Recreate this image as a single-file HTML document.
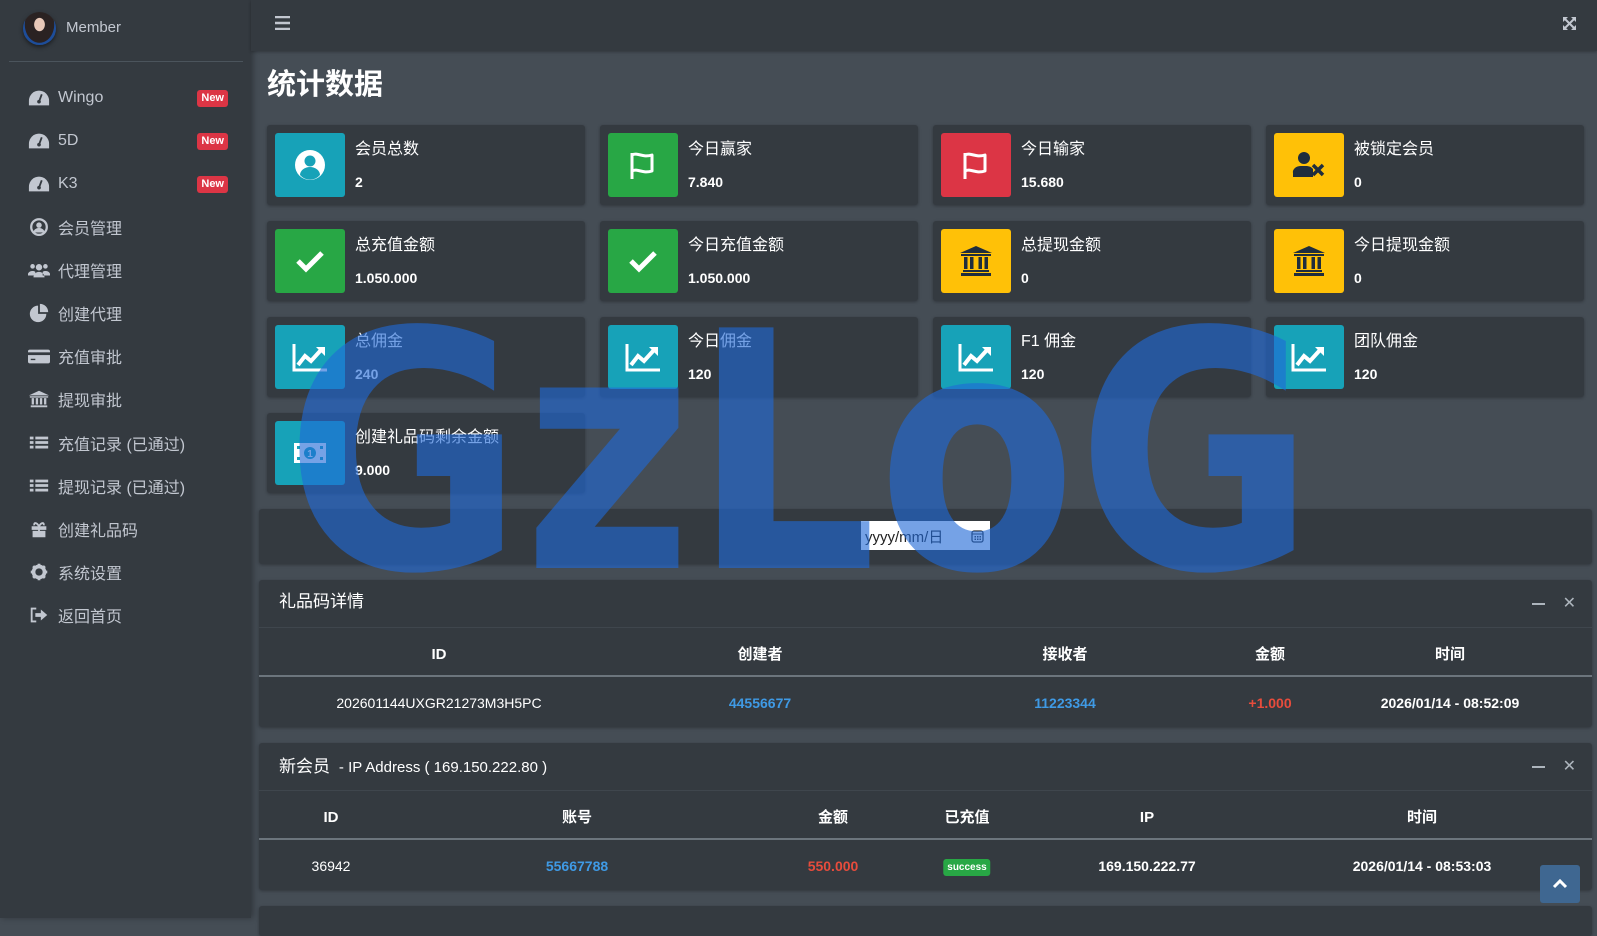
<!DOCTYPE html>
<html><head><meta charset="utf-8">
<style>
*{margin:0;padding:0;box-sizing:border-box}
body{width:1597px;height:918px;overflow:hidden;background:#454d55;font-family:"Liberation Sans","Noto Sans CJK SC",sans-serif;color:#fff;position:relative}
.a{position:absolute}
#side{left:0;top:0;width:251px;height:918px;background:#343a40;box-shadow:2px 0 6px rgba(0,0,0,.3)}
#nav{left:251px;top:0;width:1346px;height:51px;background:#343a40;box-shadow:0 1px 3px rgba(0,0,0,.3)}
.mi{position:absolute;left:28px;height:24px;display:flex;align-items:center;color:#c2c7d0;font-size:16px;width:200px}
.mi svg{width:22px;height:20px;margin-right:8px;flex:none}
.badge{position:absolute;right:0;top:4px;background:#dc3545;color:#fff;font-size:11px;font-weight:bold;padding:2px 4px;border-radius:3px;line-height:13px}
.card{position:absolute;width:318px;height:80px;background:#343a40;border-radius:3px;box-shadow:0 1px 3px rgba(0,0,0,.3)}
.ic{position:absolute;left:8px;top:8px;width:70px;height:64px;border-radius:3px;display:flex;align-items:center;justify-content:center}
.ct{position:absolute;left:88px;top:13px;font-size:16px;color:#fff;line-height:24px}
.cv{position:absolute;left:88px;top:47px;font-size:14px;font-weight:bold;line-height:20px}
.info{background:#17a2b8}.succ{background:#28a745}.dang{background:#dc3545}.warn{background:#ffc107}
.panel{position:absolute;left:259px;width:1333px;background:#343a40;border-radius:3px;box-shadow:0 1px 3px rgba(0,0,0,.3)}
.ph{height:48px;border-bottom:1px solid #3f464d;position:relative}
.ph .t{position:absolute;left:20px;top:10px;font-size:17px;line-height:24px}
.tools{position:absolute;right:16px;top:12px;color:#adb5bd;font-size:16px;line-height:24px}
.th{height:49px;border-bottom:2px solid #6c757d;position:relative}
.c{position:absolute;transform:translateX(-50%);white-space:nowrap;font-size:14px;line-height:20px}
.th .c{top:17px;font-weight:bold;font-size:15px}
.td .c{top:16px}
.blue{color:#3f9ae5;font-weight:bold}.red{color:#e74c3c;font-weight:bold}
</style></head><body>
<div id="side" class="a">
  <div class="a" style="left:23px;top:12px;width:33px;height:33px;border-radius:50%;background:radial-gradient(ellipse at 50% 38%,#e8c8b8 0 22%,#2a2222 24% 62%,#1d4d9a 64%);box-shadow:0 2px 4px rgba(0,0,0,.5)"></div>
  <div class="a" style="left:66px;top:19px;font-size:15px;color:#c2c7d0">Member</div>
  <div class="a" style="left:9px;top:61px;width:234px;height:1px;background:#4b545c"></div>
  <div class="mi" style="top:86px"><svg viewBox="0 0 24 20"><path d="M12 2a11 11 0 0 0-11 11v5h22v-5A11 11 0 0 0 12 2z" fill="#c2c7d0"/><path d="M12 14l3-8" stroke="#343a40" stroke-width="2"/><circle cx="12" cy="14" r="2" fill="#343a40"/></svg>Wingo<span class="badge">New</span></div>
  <div class="mi" style="top:129px"><svg viewBox="0 0 24 20"><path d="M12 2a11 11 0 0 0-11 11v5h22v-5A11 11 0 0 0 12 2z" fill="#c2c7d0"/><path d="M12 14l3-8" stroke="#343a40" stroke-width="2"/><circle cx="12" cy="14" r="2" fill="#343a40"/></svg>5D<span class="badge">New</span></div>
  <div class="mi" style="top:172px"><svg viewBox="0 0 24 20"><path d="M12 2a11 11 0 0 0-11 11v5h22v-5A11 11 0 0 0 12 2z" fill="#c2c7d0"/><path d="M12 14l3-8" stroke="#343a40" stroke-width="2"/><circle cx="12" cy="14" r="2" fill="#343a40"/></svg>K3<span class="badge">New</span></div>
  <div class="mi" style="top:215px"><svg viewBox="0 0 24 20"><circle cx="12" cy="10" r="8.5" fill="none" stroke="#c2c7d0" stroke-width="2.5"/><circle cx="12" cy="8" r="3" fill="#c2c7d0"/><path d="M6 16a6 5 0 0 1 12 0" fill="#c2c7d0"/></svg>会员管理</div>
  <div class="mi" style="top:258px"><svg viewBox="0 0 24 20"><circle cx="12" cy="7" r="3.5" fill="#c2c7d0"/><circle cx="5" cy="6" r="2.5" fill="#c2c7d0"/><circle cx="19" cy="6" r="2.5" fill="#c2c7d0"/><path d="M6 18a6 6 0 0 1 12 0zM0 14a5 4 0 0 1 8-2v4H0zM24 14a5 4 0 0 0-8-2v4h8z" fill="#c2c7d0"/></svg>代理管理</div>
  <div class="mi" style="top:301px"><svg viewBox="0 0 24 20"><path d="M11 2a9 9 0 1 0 9 9h-9z" fill="#c2c7d0"/><path d="M13 0v9h9a9 9 0 0 0-9-9z" fill="#c2c7d0"/></svg>创建代理</div>
  <div class="mi" style="top:344px"><svg viewBox="0 0 24 20"><rect x="0" y="3" width="24" height="15" rx="2" fill="#c2c7d0"/><rect x="0" y="6" width="24" height="3" fill="#343a40"/><rect x="3" y="13" width="5" height="1.5" fill="#343a40"/></svg>充值审批</div>
  <div class="mi" style="top:387px"><svg viewBox="0 0 24 20"><path d="M12 1l11 5H1z M2 7h20v1.5H2z M3 17h18v2H3z" fill="#c2c7d0"/><path d="M4 9h2.5v7H4zM8.5 9H11v7H8.5zM13 9h2.5v7H13zM17.5 9H20v7h-2.5z" fill="#c2c7d0"/></svg>提现审批</div>
  <div class="mi" style="top:431px"><svg viewBox="0 0 24 20"><path d="M2 3h4v3H2zM8 3h14v3H8zM2 8h4v3H2zM8 8h14v3H8zM2 13h4v3H2zM8 13h14v3H8z" fill="#c2c7d0"/></svg>充值记录 (已通过)</div>
  <div class="mi" style="top:474px"><svg viewBox="0 0 24 20"><path d="M2 3h4v3H2zM8 3h14v3H8zM2 8h4v3H2zM8 8h14v3H8zM2 13h4v3H2zM8 13h14v3H8z" fill="#c2c7d0"/></svg>提现记录 (已通过)</div>
  <div class="mi" style="top:517px"><svg viewBox="0 0 24 20"><path d="M4 7h16v4H4zM5 12h6v7H5zM13 12h6v7h-6zM11 7h2v12h-2z" fill="#c2c7d0"/><path d="M12 7C9 2 6 3 7 6M12 7c3-5 6-4 5-1" stroke="#c2c7d0" stroke-width="2" fill="none"/></svg>创建礼品码</div>
  <div class="mi" style="top:560px"><svg viewBox="0 0 24 20"><circle cx="12" cy="10" r="6" fill="none" stroke="#c2c7d0" stroke-width="4"/><path d="M12 1v4M12 15v4M3 10h4M17 10h4M5.6 3.6l2.8 2.8M15.6 13.6l2.8 2.8M5.6 16.4l2.8-2.8M15.6 6.4l2.8-2.8" stroke="#c2c7d0" stroke-width="3"/></svg>系统设置</div>
  <div class="mi" style="top:603px"><svg viewBox="0 0 24 20"><path d="M9 3H4v14h5" fill="none" stroke="#c2c7d0" stroke-width="2"/><path d="M8 8h6V4l7 6-7 6v-4H8z" fill="#c2c7d0"/></svg>返回首页</div>
</div>
<div id="nav" class="a">
  <svg class="a" style="left:24px;top:16px" width="15" height="14" viewBox="0 0 15 14"><path d="M0 1h15M0 7h15M0 13h15" stroke="#c2c7d0" stroke-width="2.5"/></svg>
  <svg class="a" style="left:1311px;top:16px" width="15" height="15" viewBox="0 0 15 15"><path d="M1 1h5L1 6zM14 1h-5l5 5zM1 14h5l-5-5zM14 14h-5l5-5z" fill="#c2c7d0"/><path d="M2 2l11 11M13 2L2 13" stroke="#c2c7d0" stroke-width="2"/></svg>
</div>
<div class="a" style="left:267px;top:65px;font-size:29px;font-weight:bold;line-height:40px">统计数据</div>

<!-- row1 -->
<div class="card" style="left:267px;top:125px"><div class="ic info"><svg width="34" height="34" viewBox="0 0 34 34"><circle cx="17" cy="17" r="15" fill="#fff"/><circle cx="17" cy="13" r="5.5" fill="#17a2b8"/><path d="M7 27a10 8 0 0 1 20 0a13 13 0 0 1-20 0z" fill="#17a2b8"/></svg></div><div class="ct">会员总数</div><div class="cv">2</div></div>
<div class="card" style="left:600px;top:125px"><div class="ic succ"><svg width="32" height="32" viewBox="0 0 32 32"><path d="M5 4v26M5 6c6-3 10 3 20 0v16c-10 3-14-3-20 0" fill="none" stroke="#fff" stroke-width="3" stroke-linejoin="round"/></svg></div><div class="ct">今日赢家</div><div class="cv">7.840</div></div>
<div class="card" style="left:933px;top:125px"><div class="ic dang"><svg width="32" height="32" viewBox="0 0 32 32"><path d="M5 4v26M5 6c6-3 10 3 20 0v16c-10 3-14-3-20 0" fill="none" stroke="#fff" stroke-width="3" stroke-linejoin="round"/></svg></div><div class="ct">今日输家</div><div class="cv">15.680</div></div>
<div class="card" style="left:1266px;top:125px"><div class="ic warn"><svg width="34" height="28" viewBox="0 0 34 28"><circle cx="12" cy="7" r="6" fill="#1f2d3d"/><path d="M1 26v-4a8 6 0 0 1 8-7h6a8 6 0 0 1 6 3v8z" fill="#1f2d3d"/><path d="M21 14l10 10M31 14l-10 10" stroke="#1f2d3d" stroke-width="3.5"/></svg></div><div class="ct">被锁定会员</div><div class="cv">0</div></div>
<!-- row2 -->
<div class="card" style="left:267px;top:221px"><div class="ic succ"><svg width="30" height="24" viewBox="0 0 30 24"><path d="M3 12l8 8L27 4" fill="none" stroke="#fff" stroke-width="5"/></svg></div><div class="ct">总充值金额</div><div class="cv">1.050.000</div></div>
<div class="card" style="left:600px;top:221px"><div class="ic succ"><svg width="30" height="24" viewBox="0 0 30 24"><path d="M3 12l8 8L27 4" fill="none" stroke="#fff" stroke-width="5"/></svg></div><div class="ct">今日充值金额</div><div class="cv">1.050.000</div></div>
<div class="card" style="left:933px;top:221px"><div class="ic warn"><svg width="34" height="32" viewBox="0 0 34 32"><path d="M17 1l16 7H1z M2 9h30v2H2z M2 28h30v3H2z M4 25h26v2H4z" fill="#1f2d3d"/><path d="M5 12h3.5v12H5zM11 12h3.5v12H11zM19.5 12H23v12h-3.5zM25.5 12H29v12h-3.5z" fill="#1f2d3d"/></svg></div><div class="ct">总提现金额</div><div class="cv">0</div></div>
<div class="card" style="left:1266px;top:221px"><div class="ic warn"><svg width="34" height="32" viewBox="0 0 34 32"><path d="M17 1l16 7H1z M2 9h30v2H2z M2 28h30v3H2z M4 25h26v2H4z" fill="#1f2d3d"/><path d="M5 12h3.5v12H5zM11 12h3.5v12H11zM19.5 12H23v12h-3.5zM25.5 12H29v12h-3.5z" fill="#1f2d3d"/></svg></div><div class="ct">今日提现金额</div><div class="cv">0</div></div>
<!-- row3 -->
<div class="card" style="left:267px;top:317px"><div class="ic info"><svg width="36" height="30" viewBox="0 0 36 30"><path d="M2 2v26h33" fill="none" stroke="#fff" stroke-width="3"/><path d="M6 23l7-9 6 5 10-11" fill="none" stroke="#fff" stroke-width="4"/><path d="M24 5h9v9z" fill="#fff"/></svg></div><div class="ct">总佣金</div><div class="cv">240</div></div>
<div class="card" style="left:600px;top:317px"><div class="ic info"><svg width="36" height="30" viewBox="0 0 36 30"><path d="M2 2v26h33" fill="none" stroke="#fff" stroke-width="3"/><path d="M6 23l7-9 6 5 10-11" fill="none" stroke="#fff" stroke-width="4"/><path d="M24 5h9v9z" fill="#fff"/></svg></div><div class="ct">今日佣金</div><div class="cv">120</div></div>
<div class="card" style="left:933px;top:317px"><div class="ic info"><svg width="36" height="30" viewBox="0 0 36 30"><path d="M2 2v26h33" fill="none" stroke="#fff" stroke-width="3"/><path d="M6 23l7-9 6 5 10-11" fill="none" stroke="#fff" stroke-width="4"/><path d="M24 5h9v9z" fill="#fff"/></svg></div><div class="ct">F1 佣金</div><div class="cv">120</div></div>
<div class="card" style="left:1266px;top:317px"><div class="ic info"><svg width="36" height="30" viewBox="0 0 36 30"><path d="M2 2v26h33" fill="none" stroke="#fff" stroke-width="3"/><path d="M6 23l7-9 6 5 10-11" fill="none" stroke="#fff" stroke-width="4"/><path d="M24 5h9v9z" fill="#fff"/></svg></div><div class="ct">团队佣金</div><div class="cv">120</div></div>
<!-- row4 -->
<div class="card" style="left:267px;top:413px"><div class="ic info"><svg width="34" height="24" viewBox="0 0 34 24"><rect x="1" y="2" width="32" height="20" fill="#fff"/><circle cx="17" cy="12" r="6" fill="#17a2b8"/><path d="M4 5h3v3H4zM27 5h3v3h-3zM4 16h3v3H4zM27 16h3v3h-3z" fill="#17a2b8"/><text x="17" y="16" font-size="10" text-anchor="middle" fill="#fff" font-weight="bold" font-family="Liberation Sans">1</text></svg></div><div class="ct">创建礼品码剩余金额</div><div class="cv">9.000</div></div>

<!-- date bar -->
<div class="panel" style="top:509px;height:55px;left:259px">
  <div class="a" style="left:602px;top:12px;width:129px;height:29px;background:#fff;color:#222;font-size:15px;padding:5px 4px">yyyy/mm/日
    <svg class="a" style="right:6px;top:8px" width="13" height="14" viewBox="0 0 13 14"><rect x="1" y="2" width="11" height="11" rx="2" fill="none" stroke="#333" stroke-width="1.3"/><path d="M1 5h11" stroke="#333"/><path d="M3.5 7h1.5v1.5H3.5zM6 7h1.5v1.5H6zM8.5 7H10v1.5H8.5zM3.5 9.5h1.5V11H3.5zM6 9.5h1.5V11H6zM8.5 9.5H10V11H8.5z" fill="#333"/></svg>
  </div>
</div>

<!-- gift panel -->
<div class="panel" style="top:580px;height:147px">
  <div class="ph"><div class="t">礼品码详情</div><div class="tools"><span style="display:inline-block;width:13px;height:2px;background:#adb5bd;vertical-align:middle;margin-right:18px"></span>✕</div></div>
  <div class="th"><span class="c" style="left:180px">ID</span><span class="c" style="left:501px">创建者</span><span class="c" style="left:806px">接收者</span><span class="c" style="left:1011px">金额</span><span class="c" style="left:1191px">时间</span></div>
  <div class="td" style="position:relative;height:48px"><span class="c" style="left:180px">202601144UXGR21273M3H5PC</span><span class="c blue" style="left:501px">44556677</span><span class="c blue" style="left:806px">11223344</span><span class="c red" style="left:1011px">+1.000</span><span class="c" style="left:1191px;font-weight:bold">2026/01/14 - 08:52:09</span></div>
</div>

<!-- new member panel -->
<div class="panel" style="top:743px;height:147px">
  <div class="ph"><div class="t" style="top:12px">新会员 <span style="font-size:15px">&nbsp;- IP Address ( 169.150.222.80 )</span></div><div class="tools"><span style="display:inline-block;width:13px;height:2px;background:#adb5bd;vertical-align:middle;margin-right:18px"></span>✕</div></div>
  <div class="th"><span class="c" style="left:72px">ID</span><span class="c" style="left:318px">账号</span><span class="c" style="left:574px">金额</span><span class="c" style="left:708px">已充值</span><span class="c" style="left:888px">IP</span><span class="c" style="left:1163px">时间</span></div>
  <div class="td" style="position:relative;height:48px"><span class="c" style="left:72px">36942</span><span class="c blue" style="left:318px">55667788</span><span class="c red" style="left:574px">550.000</span><span class="c" style="left:708px;top:19px;background:#28a745;font-size:10px;line-height:13px;font-weight:bold;padding:2px 4px;border-radius:3px">success</span><span class="c" style="left:888px;font-weight:bold">169.150.222.77</span><span class="c" style="left:1163px;font-weight:bold">2026/01/14 - 08:53:03</span></div>
</div>
<div class="panel" style="top:906px;height:30px"></div>

<!-- watermark -->
<svg class="a" style="left:0;top:0" width="1597" height="918"><text x="285" y="568" font-family="DejaVu Sans" font-weight="bold" font-size="330" fill="rgba(33,105,215,0.62)" textLength="1030" lengthAdjust="spacingAndGlyphs">GzLoG</text></svg>

<div class="a" style="left:1540px;top:865px;width:40px;height:38px;background:#3f6791;border-radius:3px"><svg class="a" style="left:12px;top:12px" width="16" height="12" viewBox="0 0 16 12"><path d="M2 10l6-6 6 6" fill="none" stroke="#fff" stroke-width="3"/></svg></div>
</body></html>
